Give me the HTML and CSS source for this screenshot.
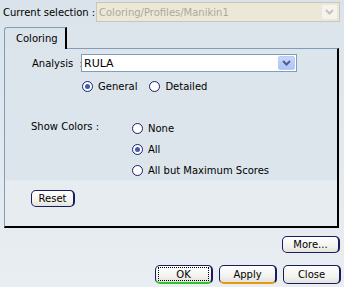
FILE: index.html
```html
<!DOCTYPE html>
<html lang="en">
<head>
    <meta charset="utf-8">
    <title>Coloring</title>
    <link rel="stylesheet" href="styles.css">
</head>
<body>
    <div class="dialog">
        <!-- current selection -->
        <div class="sel-row">
            <span class="sel-label">Current selection :</span>
            <div class="combo combo-off">
                <span class="combo-text">Coloring/Profiles/Manikin1</span>
                <span class="combo-btn btn-off">
                    <svg width="9" height="6" viewBox="0 0 9 6"><path d="M1 1 L4.5 4.5 L8 1" fill="none" stroke="#c5c3b8" stroke-width="2"/></svg>
                </span>
            </div>
        </div>

        <!-- tab strip -->
        <div class="tabs">
            <div class="tab">Coloring</div>
        </div>

        <div class="panel">
            <div class="analysis-row">
                <span class="analysis-label">Analysis &nbsp;:</span>
                <div class="combo combo-on">
                    <span class="combo-text">RULA</span>
                    <span class="combo-btn btn-on">
                        <svg width="9" height="6" viewBox="0 0 9 6"><path d="M1 1 L4.5 4.5 L8 1" fill="none" stroke="#4d6185" stroke-width="2"/></svg>
                    </span>
                </div>
            </div>

            <div class="mode-row">
                <span class="radio"><span class="dot checked"></span>General</span>
                <span class="radio"><span class="dot"></span>Detailed</span>
            </div>

            <div class="colors-row">
                <span class="colors-label">Show Colors :</span>
                <div class="colors-list">
                    <span class="radio"><span class="dot"></span>None</span>
                    <span class="radio"><span class="dot checked"></span>All</span>
                    <span class="radio"><span class="dot"></span>All but Maximum Scores</span>
                </div>
            </div>

            <div class="reset-row">
                <button class="btn btn-reset">Reset</button>
            </div>
        </div>

        <div class="more-row">
            <button class="btn btn-more">More...</button>
        </div>

        <div class="actions">
            <button class="btn btn-ok"><span class="focus">OK</span></button>
            <button class="btn btn-apply">Apply</button>
            <button class="btn btn-close">Close</button>
        </div>
    </div>
</body>
</html>
```

FILE: styles.css
```css
* {
    box-sizing: border-box;
    margin: 0;
    padding: 0;
}

html, body {
    width: 344px;
    height: 287px;
    overflow: hidden;
}

body {
    font-family: "DejaVu Sans", Verdana, sans-serif;
    font-size: 10px;
    color: #000;
    background: linear-gradient(#dae3eb, #e9eef2);
}

.dialog {
    padding-top: 2px;
}

/* top selection row */
.sel-row {
    display: flex;
    align-items: center;
    height: 20px;
}

.sel-label {
    width: 96px;
    padding-left: 3px;
    white-space: nowrap;
}

.combo {
    display: flex;
    align-items: stretch;
    border: 1px solid #7f9db9;
}

.combo-off {
    width: 244px;
    height: 20px;
    background: #ebe8d8;
    border-color: #c9c7ba;
    color: #aca899;
}

.combo-text {
    flex: 1;
    padding-left: 2px;
    display: flex;
    align-items: center;
}

.combo-btn {
    width: 17px;
    display: flex;
    align-items: center;
    justify-content: center;
    border-radius: 2px;
    margin: 1px;
}

.btn-off {
    background: #f4f3ee;
    border: 1px solid #e8e6de;
}

.btn-on {
    background: linear-gradient(#c6d5fc, #aec5f6);
    border: 1px solid #b7cbf5;
}

/* tab strip */
.tabs {
    display: flex;
    margin-top: 5px;
    padding-left: 4px;
}

.tab {
    width: 63px;
    height: 22px;
    line-height: 21px;
    padding-left: 11px;
    border: 1px solid #7f9db9;
    border-right: 2px solid #000;
    border-bottom: none;
    border-top-left-radius: 3px;
    margin-bottom: -1px;
    position: relative;
    z-index: 1;
    background: #dce4eb;
}

.panel {
    margin-left: 4px;
    width: 335px;
    height: 180px;
    border: 1px solid #7f9db9;
    border-right: 2px solid #000;
    border-bottom: 2px solid #000;
    background: linear-gradient(#dde5ec 0, #dde5ec 131px, #e6ecf0 132px);
    padding-top: 5px;
}

.analysis-row {
    display: flex;
    align-items: center;
    height: 18px;
}

.analysis-label {
    width: 76px;
    padding-left: 27px;
    white-space: nowrap;
}

.combo-on {
    width: 216px;
    height: 18px;
    background: #fff;
    font-size: 11px;
}

.mode-row {
    display: flex;
    gap: 12px;
    margin-top: 7px;
    padding-left: 77px;
}

.radio {
    display: flex;
    align-items: center;
    gap: 5px;
    height: 14px;
    white-space: nowrap;
}

.dot {
    width: 11px;
    height: 11px;
    border-radius: 50%;
    border: 1px solid #1d1b6b;
    background: #fff;
    position: relative;
}

.dot.checked::after {
    content: "";
    position: absolute;
    left: 2px;
    top: 2px;
    width: 5px;
    height: 5px;
    border-radius: 50%;
    background: #3b5fa8;
}

.colors-row {
    display: flex;
    margin-top: 23px;
}

.colors-label {
    width: 127px;
    padding-left: 26px;
    padding-top: 5px;
    white-space: nowrap;
}

.colors-list {
    display: flex;
    flex-direction: column;
    gap: 7px;
    padding-top: 5px;
}

.reset-row {
    margin-top: 13px;
    padding-left: 26px;
}

/* buttons */
.btn {
    font-family: inherit;
    font-size: 10px;
    color: #000;
    height: 18px;
    border: 1px solid #1b1b5e;
    border-right-width: 2px;
    border-radius: 5px;
    background: linear-gradient(#ffffff, #f0f0ec 70%, #e3e2db);
}

.btn-reset {
    width: 44px;
    height: 17px;
}

.more-row {
    display: flex;
    justify-content: flex-end;
    padding-right: 4px;
    margin-top: 8px;
}

.btn-more {
    width: 58px;
    height: 17px;
}

.actions {
    display: flex;
    justify-content: flex-end;
    gap: 6px;
    padding-right: 3px;
    margin-top: 12px;
}

.actions .btn {
    width: 58px;
    height: 19px;
}

.btn-ok {
    border-bottom: 2px solid #2fc22f;
    padding: 1px 2px;
}

.focus {
    display: block;
    height: 100%;
    line-height: 13px;
    border: 1px dotted #000;
}

.btn-apply {
    border-bottom: 2px solid #e39a10;
}
```
